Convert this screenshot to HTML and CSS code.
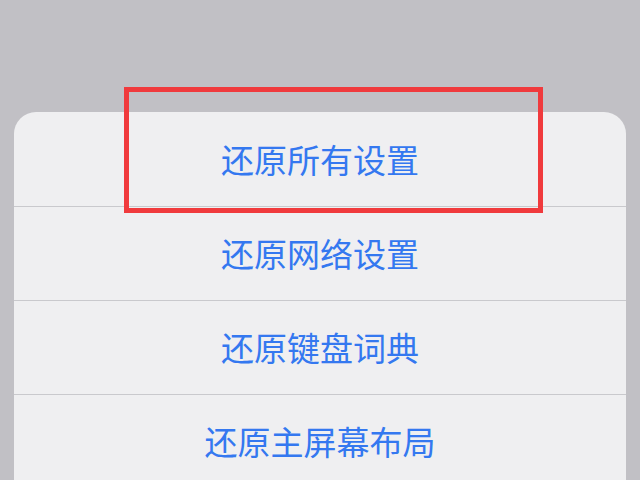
FILE: index.html
```html
<!DOCTYPE html>
<html lang="zh-CN">
<head>
<meta charset="utf-8">
<link rel="stylesheet" href="styles.css">
</head>
<body>
<div class="sheet">
  <div class="row">还原所有设置</div>
  <div class="row">还原网络设置</div>
  <div class="row">还原键盘词典</div>
  <div class="row">还原主屏幕布局</div>
</div>
<div class="highlight"></div>
</body>
</html>
```
FILE: styles.css
```css
html, body {
  margin: 0;
  padding: 0;
  width: 640px;
  height: 480px;
  overflow: hidden;
  background: #c1c0c5;
  font-family: "Noto Sans CJK SC", "Noto Sans", sans-serif;
}
.sheet {
  margin: 112px 0 0 14px;
  padding-top: 1px;
  width: 612px;
  background: #efeff1;
  border-radius: 22px 22px 0 0;
  display: flex;
  flex-direction: column;
}
.row {
  box-sizing: border-box;
  height: 94px;
  display: flex;
  align-items: center;
  justify-content: center;
  color: #3478f0;
  font-size: 33px;
  padding-bottom: 2px;
  border-bottom: 1px solid #c9c9cd;
}
.row:last-child {
  border-bottom: none;
}
.highlight {
  position: absolute;
  left: 124px;
  top: 87px;
  width: 409px;
  height: 116px;
  border: 5px solid #f03a3d;
}
```
